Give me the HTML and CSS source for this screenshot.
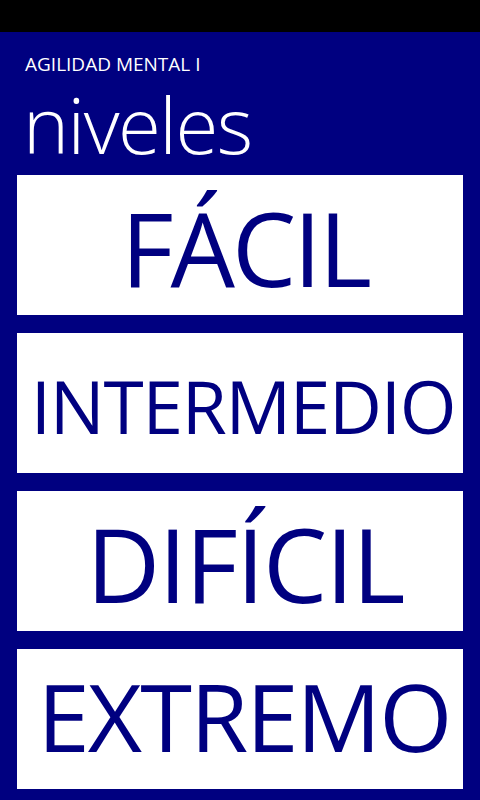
FILE: index.html
```html
<!DOCTYPE html>
<html lang="es">
<head>
<meta charset="utf-8">
<title>Agilidad Mental I - niveles</title>
<link rel="stylesheet" href="styles.css">
</head>
<body>
<div class="statusbar"></div>
<header class="header">
  <div class="app-title">AGILIDAD MENTAL I</div>
  <h1 class="page-title">niveles</h1>
</header>
<main class="levels">
  <button class="level level--facil">FÁCIL</button>
  <button class="level level--intermedio">INTERMEDIO</button>
  <button class="level level--dificil">DIFÍCIL</button>
  <button class="level level--extremo">EXTREMO</button>
</main>
</body>
</html>
```

FILE: styles.css
```css
html, body {
  margin: 0;
  padding: 0;
}
body {
  width: 480px;
  height: 800px;
  overflow: hidden;
  background: #000080;
  font-family: "Open Sans", "Noto Sans", sans-serif;
  color: #ffffff;
}
.statusbar {
  height: 32px;
  background: #000000;
}
.header {
  padding: 22px 0 0 25px;
}
.app-title {
  font-size: 19px;
  line-height: 20px;
  height: 20px;
  font-weight: 400;
}
.page-title {
  margin: 0 0 0 -2px;
  padding: 0;
  font-size: 78px;
  font-weight: 300;
  line-height: 101px;
  height: 101px;
  letter-spacing: -1.5px;
}
.levels {
  display: flex;
  flex-direction: column;
  gap: 18px;
  padding: 0 17px;
}
.level {
  display: flex;
  align-items: center;
  justify-content: center;
  height: 140px;
  width: 446px;
  margin: 0;
  border: none;
  background: #ffffff;
  color: #000080;
  font-family: "Open Sans", "Noto Sans", sans-serif;
  font-weight: 400;
  line-height: 1;
  padding: 0 0 0 10px;
  box-sizing: border-box;
  white-space: nowrap;
}
.level--facil {
  font-size: 102px;
  letter-spacing: -3px;
  padding-top: 5px;
}
.level--intermedio {
  font-size: 73px;
  letter-spacing: -1.3px;
  padding-top: 4px;
  padding-left: 6px;
}
.level--dificil {
  font-size: 102px;
  letter-spacing: -1.7px;
  padding-top: 6px;
}
.level--extremo {
  font-size: 94px;
  letter-spacing: -1.9px;
  padding-bottom: 6px;
  padding-left: 8px;
}
```
